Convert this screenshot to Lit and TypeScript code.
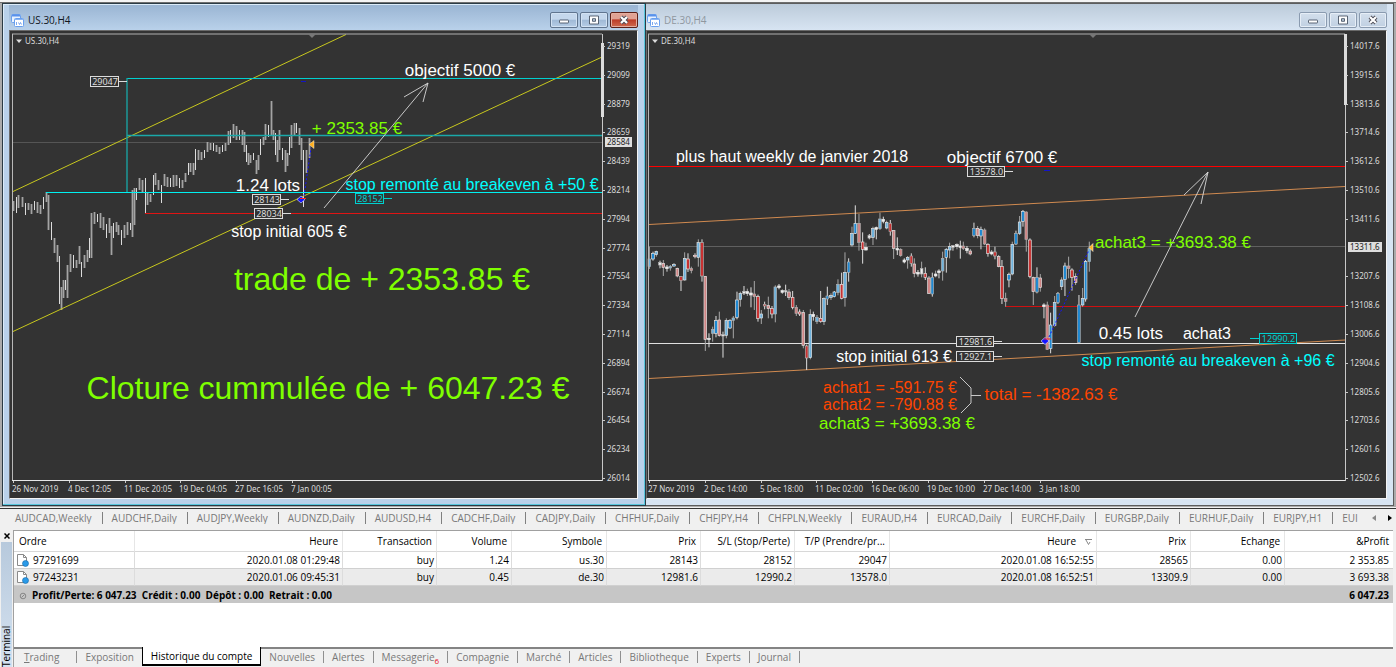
import { LitElement, html, css, svg, nothing } from "lit";
import { customElement, property } from "lit/decorators.js";

type Note = { x: number; y: number; t: string; c: string; size: string };
type PriceBox = { x: number; y: number; w: number; t: string; c: string; tail: 1 | -1 };
type ChartName = "us" | "de";

// Bars of US.30: x, high, low
const US_BARS: number[][] = [
  [13,201,211],[16,197,213],[18,195,208],[22,197,207],[25,203,215],[28,203,210],[31,204,214],[34,201,210],[37,202,213],
  [40,205,214],[43,197,209],[46,192,202],[48,195,230],[51,222,240],[54,238,253],[57,245,262],[59,256,304],[61,287,310],
  [63,280,298],[65,280,290],[67,265,298],[70,254,272],[73,255,268],[76,260,268],[79,246,264],[81,262,277],[84,255,268],
  [87,250,262],[89,238,258],[91,213,258],[94,212,224],[97,214,222],[100,213,228],[103,217,230],[106,224,238],[109,218,233],
  [111,226,255],[113,223,238],[116,222,232],[118,225,235],[121,230,245],[124,225,238],[127,222,235],[130,223,230],
  [132,190,237],[134,188,225],[136,188,200],[139,178,190],[142,180,192],[145,178,213],[147,193,205],[150,194,202],
  [153,175,195],[155,173,185],[158,180,190],[161,185,203],[164,174,186],[167,177,187],[170,178,187],[173,175,187],
  [176,175,186],[179,178,188],[182,180,188],[185,173,182],[188,163,175],[190,163,172],[193,163,175],[195,149,170],
  [198,150,160],[201,152,160],[204,150,158],[207,142,152],[210,143,150],[213,143,151],[216,145,152],[219,147,154],
  [222,145,152],[225,143,151],[228,131,145],[230,130,143],[233,124,138],[236,126,140],[239,130,140],[242,130,145],
  [244,132,152],[246,145,162],[248,153,165],[250,155,163],[253,153,160],[256,160,174],[258,155,170],[260,139,155],
  [263,137,145],[265,124,140],[268,125,137],[271,101,135],[273,130,140],[275,133,155],[277,140,162],[279,130,150],
  [282,148,160],[285,150,172],[287,153,166],[289,137,155],[291,125,148],[294,123,135],[296,123,133],[299,128,145],
  [301,138,160],[303,150,207],[306,150,173],[309,138,158],
];

// Candles of DE.30 in thirds of a pixel: x, high, body top, body bottom, low, kind (1 up, 2 down, 0 doji)
const DE_CANDLES: number[][] = [
  [28,170,207,230,237,1],[39,185,190,207,212,1],[49,182,184,194,200,1],[60,212,218,225,235,0],[70,210,220,232,258,2],
  [81,225,231,236,245,0],[91,225,229,234,242,1],[102,220,224,228,230,1],[112,233,235,258,262,2],[123,258,260,272,303,2],
  [134,187,206,270,272,1],[144,190,207,237,246,2],[154,230,236,242,250,2],[165,190,196,200,205,2],[175,148,158,202,230,1],
  [186,148,158,258,275,2],[196,258,259,448,483,2],[207,430,445,449,472,0],[218,410,418,430,455,1],[228,378,392,430,442,1],
  [238,365,390,437,440,2],[249,425,434,438,503,0],[259,385,391,436,445,1],[270,388,391,414,417,1],[280,378,384,391,445,1],
  [291,305,330,382,388,1],[301,305,310,328,350,1],[312,288,304,310,315,0],[322,296,305,311,318,0],[333,292,309,315,352,0],
  [343,273,312,320,360,2],[354,314,320,385,395,2],[364,360,372,384,402,1],[374,335,343,348,358,2],[385,320,347,356,385,2],
  [396,348,356,372,385,2],[406,286,291,372,397,1],[417,282,288,293,298,0],[427,298,302,307,312,0],[437,284,302,306,318,0],
  [447,297,306,322,330,2],[458,303,322,352,358,2],[469,345,352,370,378,2],[479,358,366,372,378,2],[490,360,368,466,475,2],
  [500,464,468,504,540,2],[511,358,374,503,508,1],[520,365,373,380,392,0],[531,375,382,395,402,1],[542,303,385,395,398,2],
  [552,322,326,395,405,1],[562,290,318,327,345,1],[573,310,316,322,330,1],[583,303,306,320,322,1],[594,268,283,308,316,1],
  [605,248,283,325,328,2],[615,187,247,323,350,1],[626,205,216,247,275,1],[636,110,130,165,170,1],[646,46,100,130,132,1],
  [657,72,100,157,182,2],[668,127,156,178,221,2],[678,158,172,180,182,0],[688,132,137,144,148,0],[699,110,116,142,165,1],
  [709,110,113,118,148,0],[720,68,87,116,120,1],[730,80,88,94,100,0],[740,92,98,114,118,1],[751,90,100,125,137,2],
  [761,120,122,175,207,2],[772,142,176,180,195,0],[782,175,178,197,200,2],[793,205,210,216,220,0],[803,198,202,210,236,1],
  [814,190,198,220,230,2],[823,205,222,250,262,2],[834,240,247,252,260,0],[845,215,236,252,262,0],[856,232,250,262,270,2],
  [867,258,264,310,312,2],[877,248,262,312,320,1],[887,242,252,258,262,0],[897,238,243,248,265,0],[908,185,205,243,272,1],
  [919,175,178,202,248,1],[929,158,170,180,205,1],[939,165,167,172,182,0],[951,160,164,170,178,0],[961,152,168,172,206,0],
  [970,155,168,176,180,2],[981,168,175,182,190,0],[991,177,183,192,196,2],[1002,98,115,137,142,1],[1013,108,115,137,145,2],
  [1023,110,118,138,178,1],[1034,115,120,162,165,2],[1044,160,163,190,200,2],[1055,180,186,192,196,0],[1065,170,186,198,208,2],
  [1076,195,200,230,232,2],[1086,210,230,326,342,2],[1097,308,326,334,350,2],[1107,248,254,270,292,1],[1117,155,163,252,256,1],
  [1128,122,130,162,165,1],[1139,78,96,130,135,1],[1149,60,64,94,110,1],[1159,64,66,148,185,2],[1170,145,150,260,265,2],
  [1180,260,262,305,345,2],[1191,232,262,306,310,1],[1201,252,264,292,305,2],[1212,340,345,350,385,0],[1222,335,345,478,480,2],
  [1232,368,405,476,490,1],[1244,318,338,406,410,1],[1254,306,310,338,342,1],[1265,262,270,290,300,1],[1275,218,228,268,318,1],
  [1286,200,228,236,265,2],[1296,235,240,262,302,2],[1307,250,260,278,285,2],[1317,315,345,458,460,1],[1328,294,326,345,350,1],
  [1337,210,215,327,335,1],[1348,155,175,215,245,1],
];

const US_NOTES: Note[] = [
  { x: 460, y: 76, t: "objectif 5000 €", c: "white", size: "l" },
  { x: 357, y: 134, t: "+ 2353.85 €", c: "green", size: "l" },
  { x: 268, y: 191, t: "1.24 lots", c: "white", size: "l" },
  { x: 472, y: 190, t: "stop remonté au breakeven à +50 €", c: "cyan", size: "m" },
  { x: 289, y: 237, t: "stop initial 605 €", c: "white", size: "m" },
  { x: 382, y: 290, t: "trade de + 2353.85 €", c: "green", size: "xl" },
  { x: 328, y: 399, t: "Cloture cummulée de + 6047.23 €", c: "green", size: "xl" },
];
const DE_NOTES: Note[] = [
  { x: 792, y: 162, t: "plus haut weekly de janvier 2018", c: "white", size: "m" },
  { x: 1002, y: 163, t: "objectif 6700 €", c: "white", size: "l" },
  { x: 1173, y: 248, t: "achat3 = +3693.38 €", c: "green", size: "l" },
  { x: 1131, y: 339, t: "0.45 lots", c: "white", size: "l" },
  { x: 1207, y: 339, t: "achat3", c: "white", size: "m" },
  { x: 894, y: 362, t: "stop initial 613 €", c: "white", size: "m" },
  { x: 1208, y: 366, t: "stop remonté au breakeven à +96 €", c: "cyan", size: "m" },
  { x: 890, y: 393, t: "achat1 = -591.75 €", c: "orange", size: "m" },
  { x: 890, y: 410, t: "achat2 = -790.88 €", c: "orange", size: "m" },
  { x: 897, y: 429, t: "achat3 = +3693.38 €", c: "green", size: "l" },
  { x: 1051, y: 400, t: "total = -1382.63 €", c: "orange", size: "l" },
];

const US_BOXES: PriceBox[] = [
  { x: 90, y: 76, w: 28, t: "29047", c: "#dcdcdc", tail: 1 },
  { x: 252, y: 194, w: 28, t: "28143", c: "#dcdcdc", tail: 1 },
  { x: 254, y: 208, w: 28, t: "28034", c: "#dcdcdc", tail: 1 },
  { x: 355, y: 193, w: 28, t: "28152", c: "#00d0d0", tail: 1 },
];
const DE_BOXES: PriceBox[] = [
  { x: 967, y: 166, w: 37, t: "13578.0", c: "#dcdcdc", tail: 1 },
  { x: 956, y: 336, w: 37, t: "12981.6", c: "#dcdcdc", tail: 1 },
  { x: 956, y: 351, w: 37, t: "12927.1", c: "#dcdcdc", tail: 1 },
  { x: 1259, y: 333, w: 37, t: "12990.2", c: "#00d0d0", tail: -1 },
];

const CHARTS = {
  us: {
    symbol: "US.30,H4", view: "10 31 627 467", left: 12, right: 602, thumb: [43, 117], marker: 312, last: [142, "28584"],
    prices: ["29319","29099","28879","28659","28439","28214","27994","27774","27554","27334","27114","26894","26674","26454","26234","26014"],
    times: ["26 Nov 2019","4 Dec 12:05","11 Dec 20:05","19 Dec 04:05","27 Dec 16:05","7 Jan 00:05"],
    notes: US_NOTES, boxes: US_BOXES,
  },
  de: {
    symbol: "DE.30,H4", view: "647 31 739 467", left: 648, right: 1345, thumb: [34, 105], marker: 1093, last: [247, "13311.6"],
    prices: ["14017.6","13915.6","13813.6","13714.6","13612.6","13510.6","13411.6","","13207.6","13108.6","13006.6","12904.6","12805.6","12703.6","12601.6","12502.6"],
    times: ["27 Nov 2019","2 Dec 14:00","5 Dec 18:00","11 Dec 02:00","16 Dec 06:00","19 Dec 10:00","27 Dec 14:00","3 Jan 18:00"],
    notes: DE_NOTES, boxes: DE_BOXES,
  },
};

const line = (x1: number, y1: number, x2: number, y2: number, c: string, w = 1) =>
  svg`<line x1=${x1} y1=${y1} x2=${x2} y2=${y2} stroke=${c} stroke-width=${w}></line>`;

@customElement("price-chart")
export class PriceChart extends LitElement {
  @property() name: ChartName = "us";

  static styles = css`
    :host { display: block; background: #333; }
    svg { display: block; width: 100%; height: auto; }
    text { font-family: "Noto Sans", "Open Sans", sans-serif; }
    .axis { font-size: 8px; fill: #dcdcdc; }
    .last { font-size: 8px; fill: #222; }
    .box { font-size: 9px; text-anchor: middle; }
    .note { font-family: "Liberation Sans", Arial, sans-serif; text-anchor: middle; }
    .m { font-size: 16px; }
    .l { font-size: 17px; }
    .xl { font-size: 32px; }
    .white { fill: #fff; }
    .green { fill: #7fff00; }
    .cyan { fill: #00ffff; }
    .orange { fill: #ff4500; }
  `;

  private us() {
    return svg`
      ${line(13, 142.5, 602, 142.5, "#555")}
      ${US_BARS.map(([x, h, l], i) => line(x + 0.5, h, x + 0.5, l, i % 3 === 1 ? "#dcdcdc" : "#a4a4a4", i % 3 === 1 ? 1 : 1.8))}
      ${line(13, 191.5, 346, 34.5, "#c8c81e")}
      ${line(13, 331.5, 602, 57, "#c8c81e")}
      ${line(127, 78.5, 602, 78.5, "#00d0d0")}
      ${line(127, 135.5, 602, 135.5, "#1aa9a9", 1.4)}
      ${line(127, 78, 127, 192, "#1aa0a0", 1.4)}
      ${line(46, 192.5, 602, 192.5, "#00f0f0")}
      ${line(145, 213.5, 602, 213.5, "#e01414")}
      ${line(301, 81.5, 306, 81.5, "#1414c8")}
      <line x1="304" y1="196" x2="311" y2="148" stroke="#1414ff" stroke-dasharray="2 2"></line>
      <path d="M297 199.500l4-3.500 4 3.500-4 3.500z" fill="#1414ff" stroke="#e8e8ff" stroke-width=".6"></path>
      ${line(300, 198.5, 306, 198.5, "#ff2020")}
      <path d="M309 144.500l5-4v8z" fill="#ffb020" stroke="#fff" stroke-width=".4"></path>
      <path d="M324 208L428 83M404 97l24-14-5 19" fill="none" stroke="#d8d8d8" stroke-width=".9"></path>
    `;
  }

  private de() {
    const fill = ["#eee", "#1e88d2", "#c83232"];
    const soft = ["#eee", "#6fb2dc", "#cf8484"];
    return svg`
      ${line(649, 246.5, 1345, 246.5, "#606060")}
      ${line(649, 343.5, 1345, 343.5, "#e0e0e0")}
      ${line(649, 166.5, 1345, 166.5, "#ff0000")}
      ${line(1005, 306.5, 1345, 306.5, "#d01010")}
      ${line(649, 224.5, 1345, 186.5, "#d08a50")}
      ${line(649, 378.5, 1345, 340, "#d08a50")}
      <g transform="translate(640 190) scale(.3333)">
        ${DE_CANDLES.map(([x, h, t, b, l, k], i) => svg`
          ${line(x, h, x, l, i % 2 ? "#e0e0e0" : "#a8a8a8", 3)}
          <rect x=${x - 4} y=${t} width="8" height=${Math.max(b - t, 3)} stroke=${i % 3 ? "#e6e6e6" : "#b0b0b0"} stroke-width="2"
            fill=${(i % 2 ? fill : soft)[k]}></rect>`)}
      </g>
      ${line(1044, 170.5, 1050, 170.5, "#1414c8")}
      <line x1="1049" y1="337" x2="1089" y2="250" stroke="#1414ff" stroke-dasharray="2 2"></line>
      <path d="M1041 341l4-3.500 4 3.500-4 3.500z" fill="#1414ff" stroke="#e8e8ff" stroke-width=".6"></path>
      ${line(1044, 339, 1051, 339, "#ff2020")}
      <path d="M1089 247.500l4-4v8z" fill="#ffb020" stroke="#fff" stroke-width=".5"></path>
      <path d="M1135 317l73-145M1184 195l24-23-7 32" fill="none" stroke="#d8d8d8" stroke-width=".9"></path>
      <path d="M960 377l11 11v15l-10 10M971 395.500h10" fill="none" stroke="#c8c8c8"></path>
    `;
  }

  render() {
    const c = CHARTS[this.name];
    const [lastY, lastText] = c.last as [number, string];
    return html`<svg viewBox=${c.view} role="img" aria-label=${c.symbol}>
      ${this.name === "us" ? this.us() : this.de()}
      ${line(c.left, 34, c.right, 34, "#b0b0b0")}
      ${line(c.left + 0.5, 34, c.left + 0.5, 480, "#b8b8b8")}
      ${line(c.right + 0.5, 34, c.right + 0.5, 481, "#c8c8c8")}
      ${line(c.left, 480.5, c.right, 480.5, "#e6e6e6")}
      ${line(c.right + 0.5, c.thumb[0], c.right + 0.5, c.thumb[1], "#dcdcdc", 3)}
      <path d="M${c.marker - 4} 34h8l-4 4z" fill="#777"></path>
      <path d="M${c.left + 4} 39.500h6l-3 3.500z" fill="#dcdcdc"></path>
      <text class="axis" x=${c.left + 13} y="44">${c.symbol}</text>
      ${c.prices.map((p, i) => {
        const y = 46 + i * 28.8;
        return p ? svg`${line(c.right + 1, Math.round(y) + 0.5, c.right + 3, Math.round(y) + 0.5, "#c8c8c8")}
          <text class="axis" x=${c.right + 5} y=${Math.round(y) + 3}>${p}</text>` : nothing;
      })}
      <rect x=${c.right + 3} y=${lastY - 5} width=${lastText.length > 5 ? 34 : 27} height="10" fill="#dedede"></rect>
      <text class="last" x=${c.right + 5} y=${lastY + 3}>${lastText}</text>
      ${c.times.map((t, i) => svg`
        ${line(c.left + 1.5 + Math.round(i * 55.8), 481, c.left + 1.5 + Math.round(i * 55.8), 483, "#c8c8c8")}
        <text class="axis" x=${c.left + Math.round(i * 55.8)} y="492">${t}</text>`)}
      ${c.boxes.map((b) => svg`
        <rect x=${b.x + 0.5} y=${b.y + 0.5} width=${b.w} height="10" fill="#333" stroke=${b.c}></rect>
        ${b.tail > 0 ? line(b.x + b.w + 1, b.y + 5.5, b.x + b.w + 9, b.y + 5.5, b.c) : line(b.x - 9, b.y + 5.5, b.x, b.y + 5.5, b.c)}
        <text class="box" x=${b.x + b.w / 2 + 1} y=${b.y + 9} fill=${b.c}>${b.t}</text>`)}
      ${c.notes.map((n) => svg`<text class="note ${n.size} ${n.c}" x=${n.x} y=${n.y}>${n.t}</text>`)}
    </svg>`;
  }
}

@customElement("chart-window")
export class ChartWindow extends LitElement {
  @property() name: ChartName = "us";
  @property({ type: Boolean, reflect: true }) active = false;

  static styles = css`
    :host { display: block; box-sizing: border-box; min-width: 0; background: #d7e4f2; border: 1px solid #5c5c5c; border-left: 0; padding: 0 6px 6px 0; }
    :host([active]) { background: #b9d1ea; border: 1px solid #2b3b45; padding: 0 7px 6px 6px; box-shadow: inset -1px -1px 0 #58c6dc, inset 1px 1px 0 #dcebf8; }
    header { display: flex; align-items: center; height: 26px; gap: 4px; font: 10px/14px "Open Sans", "Noto Sans", sans-serif; color: #8f979f; background: linear-gradient(#bccbda, #d7e4f2); }
    :host([active]) header { color: #10151c; background: linear-gradient(#9ab5d3, #b9d1ea); margin-top: 1px; height: 25px; }
    .name { flex: 1; padding-top: 5px; }
    .icon { width: 13px; height: 13px; margin: 6px 0 0 1px; }
    :host([active]) .icon { margin-left: 2px; }
    .controls { display: flex; gap: 2px; padding-top: 5px; }
    button { width: 28px; height: 16px; padding: 0; border: 1px solid #8a9bb0; border-radius: 2px; background: linear-gradient(#d3dfec, #c0d0e2); display: grid; place-items: center; box-shadow: inset 0 0 0 1px #e6eef7; }
    :host([active]) button { border-color: #60758f; background: linear-gradient(#c4d7ec 45%, #9fb9d6 50%, #b6cde6); box-shadow: inset 0 0 0 1px #d2e2f3; }
    :host([active]) button.close { border-color: #5c2018; background: linear-gradient(#e0a294 40%, #bd3d28 50%, #cf6b50); box-shadow: inset 0 0 0 1px #e4ad9f; }
    button svg { width: 12px; height: 10px; display: block; }
    .client { border: 1px solid #6a6a6a; border-right-color: #f4f4f4; border-bottom-color: #f4f4f4; }
  `;

  render() {
    const title = CHARTS[this.name].symbol;
    return html`
      <header>
        <svg class="icon" viewBox="0 0 13 13" aria-hidden="true">
          <rect x=".5" y=".5" width="9" height="8" rx="1" fill="#e8f2ff" stroke="#6aa0ee"></rect>
          <path d="M1 1.500h8" stroke="#5a92ea" stroke-width="2"></path>
          <rect x="3.500" y="4.500" width="9" height="8" rx="1" fill="#fff" stroke="#6aa0ee"></rect>
          <path d="M4 5.500h8" stroke="#8ab6f4"></path>
          <path d="M5.500 8v3M7.500 8.500l1 2 1-2 1 2" fill="none" stroke="#5a92ea" stroke-width=".8"></path>
        </svg>
        <span class="name">${title}</span>
        <div class="controls">
          <button aria-label="Réduire"><svg viewBox="0 0 12 10"><rect x="1.500" y="5" width="9" height="3" rx=".5" fill="#fff" stroke="#4a5666" stroke-width=".9"></rect></svg></button>
          <button aria-label="Agrandir"><svg viewBox="0 0 12 10"><path d="M1.500 1h9v8h-9z" fill="#fff" stroke="#4a5666" stroke-width=".9"></path><path d="M4.500 3.700h3v2.600h-3z" fill="#b9c9da" stroke="#4a5666" stroke-width=".9"></path></svg></button>
          <button class="close" aria-label="Fermer"><svg viewBox="0 0 12 10"><path d="M3 2l6 6M9 2L3 8" stroke="#4a4a55" stroke-width="4"></path><path d="M3 2l6 6M9 2L3 8" stroke="#fff" stroke-width="2.200"></path></svg></button>
        </div>
      </header>
      <div class="client"><price-chart name=${this.name}></price-chart></div>
    `;
  }
}

const CHART_TABS = ["AUDCAD,Weekly","AUDCHF,Daily","AUDJPY,Weekly","AUDNZD,Daily","AUDUSD,H4","CADCHF,Daily","CADJPY,Daily","CHFHUF,Daily","CHFJPY,H4","CHFPLN,Weekly","EURAUD,H4","EURCAD,Daily","EURCHF,Daily","EURGBP,Daily","EURHUF,Daily","EURJPY,H1","EUI"];
const COLUMNS: [string, number][] = [["Ordre",121],["Heure",208],["Transaction",94],["Volume",75],["Symbole",95],["Prix",94],["S/L (Stop/Perte)",94],["T/P (Prendre/pr...",95],["Heure",207],["Prix",94],["Echange",94],["&Profit",108]];
const TOTAL = COLUMNS.reduce((s, [, w]) => s + w, 0);
const ROWS = [
  ["97291699","2020.01.08 01:29:48","buy","1.24","us.30","28143","28152","29047","2020.01.08 16:52:55","28565","0.00","2 353.85"],
  ["97243231","2020.01.06 09:45:31","buy","0.45","de.30","12981.6","12990.2","13578.0","2020.01.08 16:52:51","13309.9","0.00","3 693.38"],
];
const PANELS = ["Trading","Exposition","Historique du compte","Nouvelles","Alertes","Messagerie","Compagnie","Marché","Articles","Bibliotheque","Experts","Journal"];

@customElement("app-root")
export class AppRoot extends LitElement {
  static styles = css`
    :host { display: flex; flex-direction: column; min-height: 100vh; background: #f0f0f0; color: #000; font: 10px/14px "Open Sans", "Noto Sans", sans-serif; }
    * { box-sizing: border-box; }
    button { font: inherit; color: inherit; background: none; border: 0; padding: 0; white-space: nowrap; }
    .strip { height: 2px; background: #f4f4f4; }
    .desk { display: grid; grid-template-columns: 644fr 748fr; background: #ababab; padding: 0 2px 1px; border-top: 1px solid #6e6e6e; }
    .charts { display: flex; align-items: center; height: 20px; margin-top: 1px; border-top: 1px solid #333; color: #787878; padding: 0 4px 2px 6px; }
    .charts .list { display: flex; flex: 1; min-width: 0; overflow: hidden; }
    .charts .list button { padding: 0 10px 0 9px; border-right: 1px solid #808080; line-height: 12px; }
    .charts .list button:last-child { border: 0; padding-right: 0; }
    .arrows { display: flex; gap: 12px; }
    .arrows svg { width: 4px; height: 6px; display: block; }
    .terminal { flex: 1; display: grid; grid-template-columns: 13px minmax(0, 1fr); padding-right: 3px; margin-top: 2px; }
    .side { display: flex; flex-direction: column; align-items: center; }
    .side button { height: 12px; }
    .side svg { width: 6px; height: 6px; display: block; }
    .caption { flex: 1; width: 11px; background: linear-gradient(#d5e2f0, #b7c9dc); writing-mode: vertical-rl; transform: rotate(180deg); font-size: 10px; line-height: 11px; }
    .main { display: flex; flex-direction: column; border-left: 1px solid #a0a0a0; border-top: 1px solid #a0a0a0; min-width: 0; }
    .sheet { flex: 1; background: #fff; }
    table { width: 100%; table-layout: fixed; border-collapse: separate; border-spacing: 0; }
    th, td { text-align: right; white-space: nowrap; overflow: hidden; font-weight: 400; border-right: 1px solid #dcdcdc; padding: 0; }
    th { height: 21px; padding-right: 4px; border-right-color: #e6e6e6; border-bottom: 1px solid #d8d8d8; }
    th:first-child { text-align: left; padding-left: 5px; }
    td { height: 17px; padding-right: 2px; border-bottom: 1px solid #d0d0d0; line-height: 16px; }
    tbody tr:nth-child(2) td { background: #ebebeb; }
    .order { display: flex; align-items: center; gap: 4px; padding-left: 3px; }
    .order svg { width: 12px; height: 14px; }
    th:last-child, td:last-child { border-right: 0; padding-right: 4px; }
    .sum td { background: #c6c6c6; font-weight: 700; border: 0; }
    .sum td:first-child { text-align: left; white-space: pre; padding-left: 5px; }
    .sum svg { width: 8px; height: 8px; margin-right: 5px; vertical-align: -1px; }
    .sort { width: 7px; height: 6px; margin: 0 0 0 9px; }
    .panels { display: flex; align-items: flex-start; height: 20px; border-top: 2px solid #848484; color: #787878; }
    .panels button { padding: 0 8px; line-height: 12px; border-right: 1px solid #909090; margin-top: 2px; }
    .panels button:first-child { padding: 0 17px 0 10px; }
    .panels button:first-child::first-letter { text-decoration: underline; }
    .panels button:nth-child(2) { border: 0; }
    .panels button.on { color: #000; background: #fff; border: 1px solid #000; border-top: 0; border-bottom-width: 2px; margin-top: -2px; padding: 3px 8px 1px; line-height: 13px; }
    sub { color: #e81123; font-size: 8px; line-height: 0; }
  `;

  render() {
    return html`
      <div class="strip"></div>
      <main class="desk">
        <chart-window name="us" active></chart-window>
        <chart-window name="de"></chart-window>
      </main>
      <nav class="charts" aria-label="Graphiques">
        <div class="list">${CHART_TABS.map((t) => html`<button>${t}</button>`)}</div>
        <div class="arrows">
          <button aria-label="Précédent"><svg viewBox="0 0 4 6"><path d="M4 0v6L0 3z" fill="#888"></path></svg></button>
          <button aria-label="Suivant"><svg viewBox="0 0 4 6"><path d="M0 0v6l4-3z" fill="#000"></path></svg></button>
        </div>
      </nav>
      <section class="terminal">
        <aside class="side">
          <button aria-label="Fermer le terminal"><svg viewBox="0 0 6 6"><path d="M.5.500l5 5M5.500.500l-5 5" stroke="#000" stroke-width="1.500"></path></svg></button>
          <span class="caption">Terminal</span>
        </aside>
        <div class="main">
          <div class="sheet">
            <table>
              <colgroup>${COLUMNS.map(([, w]) => html`<col style="width:${(w / TOTAL) * 100}%">`)}</colgroup>
              <thead><tr>${COLUMNS.map(([n], i) => html`<th scope="col">${n}${i === 8
                ? html`<svg class="sort" viewBox="0 0 7 6"><path d="M0 .5h7M1 1l2.500 4.500L5 3" fill="none" stroke="#888"></path></svg>` : nothing}</th>`)}</tr></thead>
              <tbody>
                ${ROWS.map((r) => html`<tr>${r.map((v, i) => i
                  ? html`<td>${v}</td>`
                  : html`<td><span class="order"><svg viewBox="0 0 12 14"><path d="M.5 1.500h6l3 3v8h-9z" fill="#fff" stroke="#8a8a8a"></path><path d="M6.500 1.500v3h3" fill="none" stroke="#8a8a8a"></path><circle cx="8.500" cy="10.500" r="3" fill="#2a9ae8" stroke="#1468a8" stroke-width=".6"></circle></svg>${v}</span></td>`)}</tr>`)}
                <tr class="sum">
                  <td colspan="11"><svg viewBox="0 0 8 8"><circle cx="4" cy="4" r="2.800" fill="none" stroke="#888"></circle><path d="M2.500 5.500l3-3" stroke="#888"></path></svg>Profit/Perte: 6 047.23  Crédit : 0.00  Dépôt : 0.00  Retrait : 0.00</td>
                  <td>6 047.23</td>
                </tr>
              </tbody>
            </table>
          </div>
          <nav class="panels" aria-label="Terminal">
            ${PANELS.map((p) => html`<button class=${p === "Historique du compte" ? "on" : ""}>${p}${p === "Messagerie" ? html`<sub>6</sub>` : nothing}</button>`)}
          </nav>
        </div>
      </section>
    `;
  }
}
